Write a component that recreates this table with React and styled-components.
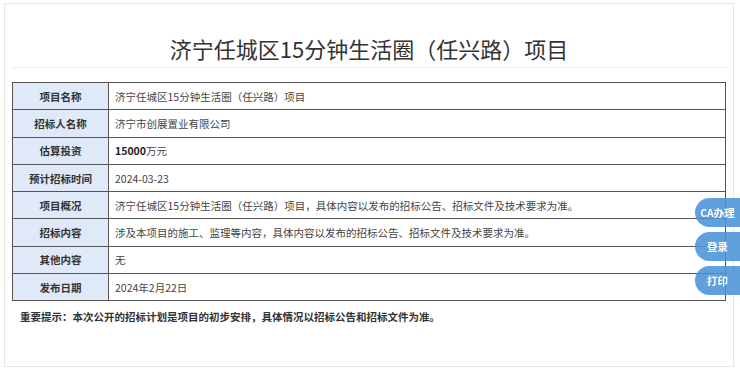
import React from 'react';
import styled, { createGlobalStyle } from 'styled-components';

const GlobalStyle = createGlobalStyle`
  body {
    margin: 0;
    background: #fff;
    font-family: "Noto Sans CJK SC", "Noto Sans", sans-serif;
    color: #333;
  }
`;

const Card = styled.div`
  margin: 3px 6px 0 4px;
  height: 364px;
  box-sizing: border-box;
  border: 1px solid #e6e6e6;
  padding: 0 7px;
`;

const Title = styled.h1`
  margin: 0;
  padding: 29px 0 4px;
  font-size: 22px;
  line-height: 30px;
  font-weight: normal;
  text-align: center;
  color: #333;
  border-bottom: 1px solid #eee;
`;

const InfoTable = styled.table`
  margin-top: 14px;
  width: 100%;
  border-collapse: collapse;
  border: 1px solid #444;
  font-size: 10.5px;
`;

const Row = styled.tr`
  height: 27.3px;
`;

const Label = styled.td`
  width: 95px;
  padding: 0;
  background: #dfe9f7;
  border: 1px solid #555;
  text-align: center;
  font-weight: bold;
  color: #333;
`;

const Value = styled.td`
  padding: 0 6px;
  border: 1px solid #555;
  color: #444;
`;

const Strong = styled.b`
  color: #222;
`;

const Note = styled.p`
  margin: 8px 0 0 8px;
  font-size: 10.5px;
  font-weight: bold;
  color: #333;
`;

const SideBar = styled.div`
  position: fixed;
  right: 0;
  top: 198px;
  display: flex;
  flex-direction: column;
  gap: 5px;
`;

const SideButton = styled.div`
  width: 45px;
  height: 29px;
  border-radius: 15px 0 0 15px;
  background: rgba(74, 148, 216, 0.88);
  color: #fff;
  font-size: 10.5px;
  font-weight: bold;
  display: flex;
  align-items: center;
  justify-content: center;
`;

const rows = [
  ['项目名称', '济宁任城区15分钟生活圈（任兴路）项目'],
  ['招标人名称', '济宁市创展置业有限公司'],
  ['估算投资', <><Strong>15000</Strong>万元</>],
  ['预计招标时间', '2024-03-23'],
  ['项目概况', '济宁任城区15分钟生活圈（任兴路）项目，具体内容以发布的招标公告、招标文件及技术要求为准。'],
  ['招标内容', '涉及本项目的施工、监理等内容，具体内容以发布的招标公告、招标文件及技术要求为准。'],
  ['其他内容', '无'],
  ['发布日期', '2024年2月22日'],
];

export default function App() {
  return (
    <>
      <GlobalStyle />
      <Card>
        <Title>济宁任城区15分钟生活圈（任兴路）项目</Title>
        <InfoTable>
          <tbody>
            {rows.map(([k, v]) => (
              <Row key={k}>
                <Label>{k}</Label>
                <Value>{v}</Value>
              </Row>
            ))}
          </tbody>
        </InfoTable>
        <Note>重要提示：本次公开的招标计划是项目的初步安排，具体情况以招标公告和招标文件为准。</Note>
      </Card>
      <SideBar>
        <SideButton>CA办理</SideButton>
        <SideButton>登录</SideButton>
        <SideButton>打印</SideButton>
      </SideBar>
    </>
  );
}
